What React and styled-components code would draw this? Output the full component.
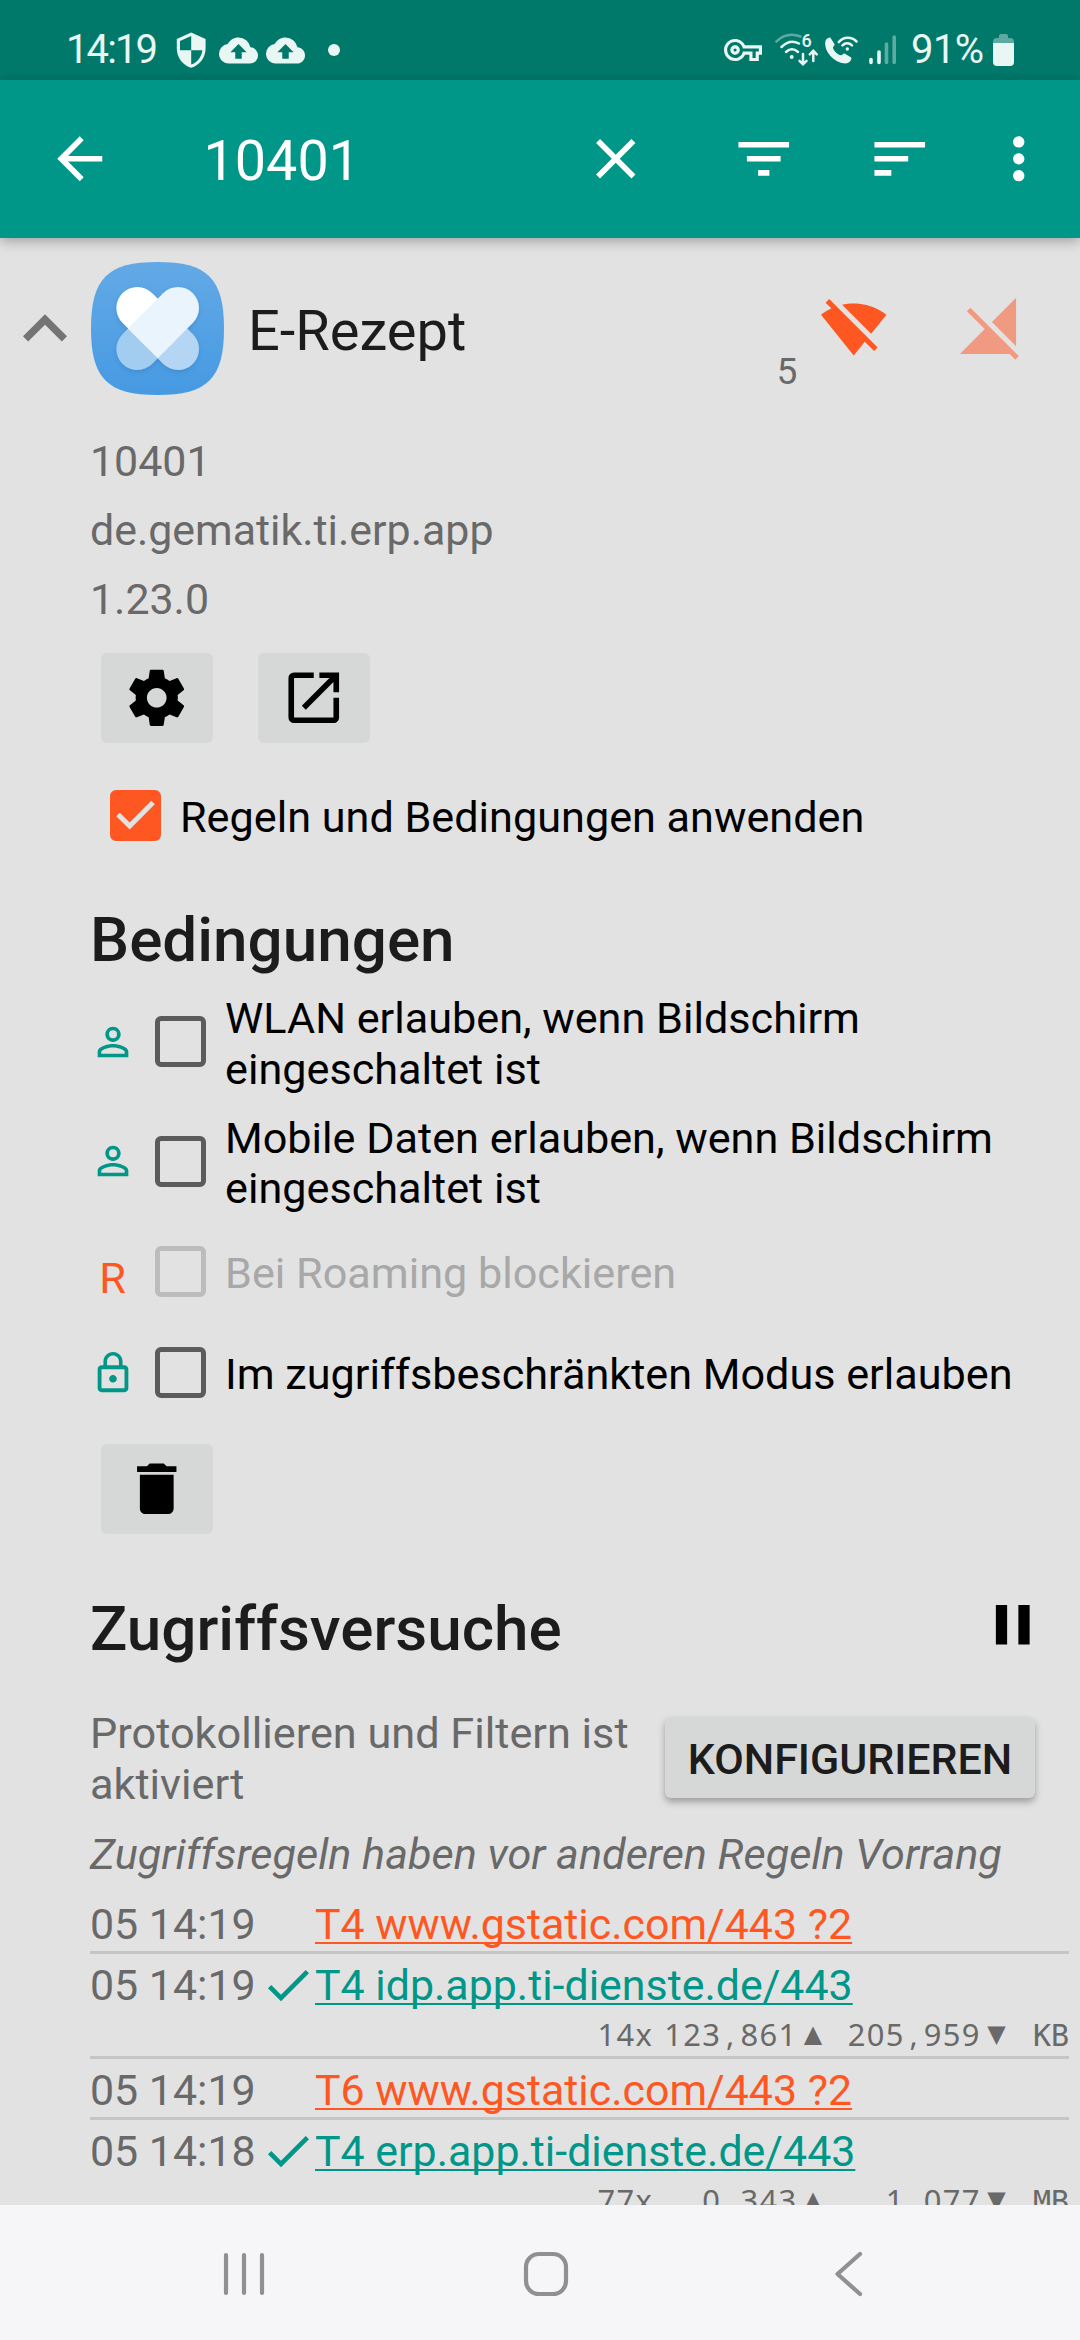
import React, { useState } from "react";
import styled, { createGlobalStyle } from "styled-components";
import {
  MdArrowBack,
  MdCheck,
  MdClose,
  MdCloudUpload,
  MdDelete,
  MdExpandLess,
  MdFilterList,
  MdLockOutline,
  MdMoreVert,
  MdOpenInNew,
  MdOutlineVpnKey,
  MdPause,
  MdPersonOutline,
  MdSecurity,
  MdSort,
} from "react-icons/md";

const TEAL = "#009688";
const TEAL_DARK = "#00796b";
const ORANGE = "#ff5722";
const BACKGROUND = "#e2e2e2";
const BUTTON = "#d6d8d7";
const TEXT_PRIMARY = "#1c1c1c";
const TEXT_SECONDARY = "#696969";

const GlobalStyle = createGlobalStyle`
  body {
    margin: 0;
    background: ${BACKGROUND};
    font-family: Roboto, "Liberation Sans", sans-serif;
  }

  svg {
    display: block;
    flex-shrink: 0;
  }
`;

const Screen = styled.div`
  display: flex;
  flex-direction: column;
  width: 1080px;
  height: 2340px;
  overflow: hidden;
  background: ${BACKGROUND};
`;

const StatusBar = styled.div`
  display: flex;
  align-items: center;
  justify-content: space-between;
  flex-shrink: 0;
  box-sizing: border-box;
  height: 80px;
  padding: 20px 66px 0 66px;
  background: ${TEAL_DARK};
  color: #e8f6f4;
`;

const StatusGroup = styled.div`
  display: flex;
  align-items: center;
`;

const Clock = styled.div`
  width: 106px;
  font-size: 40px;
  line-height: 48px;
  letter-spacing: -1.9px;
`;

const StatusDot = styled.div`
  width: 12px;
  height: 12px;
  margin-left: 23px;
  border-radius: 50%;
  background: currentColor;
`;

const Battery = styled.div`
  width: 82px;
  margin-left: 14px;
  font-size: 40px;
  line-height: 48px;
  letter-spacing: -0.6px;
`;

const Spacer = styled.div`
  width: ${(props) => props.$width}px;
`;

const Toolbar = styled.div`
  display: flex;
  align-items: center;
  flex-shrink: 0;
  box-sizing: border-box;
  height: 158px;
  padding: 0 28px 0 46px;
  background: ${TEAL};
  color: #ffffff;
  font-size: 67.5px;
  box-shadow: 0 3px 12px rgba(0, 0, 0, 0.3);
  z-index: 1;
`;

const SearchText = styled.div`
  flex: 1;
  margin-left: 90px;
  padding-top: 3px;
  font-size: 55.7px;
  line-height: 66px;
`;

const Actions = styled.div`
  display: grid;
  grid-template-columns: 148px 136px 119px 67.5px;
`;

const Content = styled.div`
  flex: 1;
  min-height: 0;
  overflow: hidden;
`;

const AppHeader = styled.div`
  display: flex;
  align-items: center;
  height: 181px;
  padding-left: 1px;
`;

const Expander = styled.div`
  width: 90px;
  font-size: 88px;
  color: #747474;
`;

const AppName = styled.div`
  flex: 1;
  margin-left: 24px;
  padding-top: 5px;
  font-size: 56px;
  line-height: 65px;
  color: ${TEXT_PRIMARY};
`;

const RuleCount = styled.div`
  align-self: flex-end;
  width: 43px;
  padding-bottom: 26px;
  font-size: 37.1px;
  line-height: 43px;
  color: ${TEXT_SECONDARY};
`;

const NetworkIcon = styled.svg`
  width: 67.5px;
  height: 67.5px;
  margin-right: ${(props) => props.$gap}px;
  fill: ${ORANGE};
  opacity: ${(props) => (props.$dim ? 0.5 : 1)};
`;

const Details = styled.div`
  padding: 8px 11px 0 90px;
  font-size: 42.9px;
  line-height: 50.7px;
  color: ${TEXT_SECONDARY};
`;

const DetailLine = styled.div`
  line-height: 69px;
`;

const ButtonRow = styled.div`
  display: flex;
  gap: 45px;
  padding-left: 11px;
  margin-top: ${(props) => props.$top}px;
`;

const IconButton = styled.button`
  display: flex;
  align-items: center;
  justify-content: center;
  width: 112px;
  height: 90px;
  padding: 0;
  border: 0;
  border-radius: 6px;
  background: ${BUTTON};
  color: #000000;
  font-size: 67.5px;
`;

const ApplyRow = styled.div`
  display: flex;
  align-items: center;
  height: 90px;
  margin-top: 27px;
  padding-left: 20px;
`;

const CheckBox = styled.div`
  display: flex;
  align-items: center;
  justify-content: center;
  flex-shrink: 0;
  box-sizing: border-box;
  width: 51px;
  height: 51px;
  border: 5px solid ${(props) => (props.$checked ? ORANGE : "#5b5b5b")};
  border-radius: 6px;
  background: ${(props) => (props.$checked ? ORANGE : "transparent")};
  opacity: ${(props) => (props.$disabled ? 0.28 : 1)};
`;

const CheckLabel = styled.div`
  margin-left: 19px;
  padding-top: 6px;
  font-size: 43.2px;
  line-height: 50.4px;
  color: ${(props) => (props.$disabled ? "#a8a8a8" : "#000000")};
`;

const HeadingRow = styled.div`
  display: flex;
  align-items: center;
  justify-content: space-between;
  height: 73px;
  margin-top: ${(props) => props.$top}px;
  padding-right: 23px;
  font-size: 67.5px;
  color: #000000;

  svg {
    margin-bottom: 6px;
  }
`;

const Heading = styled.div`
  padding-top: 2px;
  font-size: 62px;
  font-weight: 500;
  line-height: 73px;
  color: ${TEXT_PRIMARY};
`;

const Conditions = styled.div`
  margin-top: 7px;
`;

const Condition = styled.div`
  display: flex;
  align-items: center;
  height: ${(props) => (props.$tall ? 119.5 : 101)}px;
`;

const ConditionIcon = styled.div`
  display: flex;
  justify-content: center;
  width: 45px;
  margin-right: 20px;
  font-size: 46px;
  color: ${TEAL};
`;

const RoamingMark = styled.div`
  padding-top: 16px;
  font-size: 43.3px;
  color: ${ORANGE};
`;

const ConfigRow = styled.div`
  display: flex;
  align-items: center;
  justify-content: space-between;
  height: 101px;
  margin-top: 45px;
  padding-right: 34px;
`;

const ConfigText = styled.div`
  width: 560px;
  font-size: 43.25px;
  line-height: 50.4px;
`;

const ConfigButton = styled.button`
  width: 370px;
  height: 81px;
  margin-bottom: 5px;
  padding: 4px 0 0;
  border: 0;
  border-radius: 6px;
  background: ${BUTTON};
  color: ${TEXT_PRIMARY};
  font-family: inherit;
  font-size: 42.9px;
  font-weight: 500;
  text-transform: uppercase;
  white-space: nowrap;
  box-shadow: 0 4px 7px rgba(0, 0, 0, 0.3);
`;

const Hint = styled.div`
  margin: 20px 0 12px;
  font-size: 43.2px;
  font-style: italic;
  white-space: nowrap;
`;

const LogEntry = styled.div`
  padding: 6px 0 1px;
  border-bottom: 3px solid #c5c5c5;
`;

const LogLine = styled.div`
  display: grid;
  grid-template-columns: 170px 55px 1fr;
  height: 51px;
`;

const LogState = styled.div`
  margin-top: -3px;
  font-size: 56px;
  color: ${TEAL};
`;

const LogHost = styled.div`
  color: ${(props) => (props.$allowed ? TEAL : ORANGE)};
  white-space: nowrap;
  text-decoration: underline;
  text-decoration-thickness: 2px;
  text-decoration-skip-ink: none;
  text-underline-offset: 3px;
`;

const Traffic = styled.div`
  display: flex;
  justify-content: flex-end;
  height: 44px;
  font-family: "Noto Sans", sans-serif;
  font-size: 30.9px;
  line-height: 47px;
  letter-spacing: 1.35px;
  white-space: pre;
`;

const Fixed = styled.span`
  display: inline-block;
  width: ${(props) => props.$cells * 19.05}px;
  text-align: ${(props) => props.$align || "right"};
`;

const Unit = styled(Fixed)`
  font-family: "DejaVu Sans Mono", monospace;
  font-size: 30px;
  line-height: 50px;
  letter-spacing: 0;
`;

const Arrow = styled.span`
  display: inline-block;
  width: 31px;
  font-family: "DejaVu Sans", sans-serif;
  font-size: 24px;
  letter-spacing: 0;
  text-align: center;
`;

const NavBar = styled.div`
  display: grid;
  grid-template-columns: 301px 295px 46px;
  align-items: center;
  flex-shrink: 0;
  box-sizing: border-box;
  height: 135px;
  padding: 3px 0 0 222px;
  background: #f6f6f8;
`;

const NavIcon = styled.svg`
  width: 46px;
  height: 46px;
  fill: none;
  stroke: #909090;
  stroke-width: 4.2;
  stroke-linecap: round;
  stroke-linejoin: round;
`;

const CONDITIONS = [
  { icon: <MdPersonOutline />, label: ["WLAN erlauben, wenn Bildschirm", "eingeschaltet ist"] },
  { icon: <MdPersonOutline />, label: ["Mobile Daten erlauben, wenn Bildschirm", "eingeschaltet ist"] },
  { icon: <RoamingMark>R</RoamingMark>, label: ["Bei Roaming blockieren"], disabled: true },
  { icon: <MdLockOutline />, label: ["Im zugriffsbeschränkten Modus erlauben"] },
];

const LOG = [
  { time: "05 14:19", host: "T4 www.gstatic.com/443 ?2" },
  {
    time: "05 14:19",
    host: "T4 idp.app.ti-dienste.de/443",
    allowed: true,
    traffic: { count: "14x", up: "123,861", down: "205,959", unit: "KB" },
  },
  { time: "05 14:19", host: "T6 www.gstatic.com/443 ?2" },
  {
    time: "05 14:18",
    host: "T4 erp.app.ti-dienste.de/443",
    allowed: true,
    traffic: { count: "77x", up: "0,343", down: "1,077", unit: "MB" },
  },
];

function WifiStatus() {
  return (
    <svg width="44" height="34" viewBox="0 0 44 34" fill="none" stroke="currentColor" strokeWidth="2.5" strokeLinecap="round">
      <path d="M1.5 8.5C8 2 17 .5 25.5 3.5" opacity=".4" />
      <path d="M6.5 14C12 8.5 18.5 7.5 24 10.5" />
      <path d="M11 19c4-3.7 8-3.7 12 0" />
      <circle cx="16.7" cy="24" r="2" fill="currentColor" stroke="none" />
      <path d="M28 21v10M24.5 27.8l3.5 3.5 3.5-3.5M38.3 28V18M34.8 21.3l3.5-3.5 3.5 3.5" />
      <text x="26.5" y="13.5" fontSize="18" fontWeight="500" fill="currentColor" stroke="none">
        6
      </text>
    </svg>
  );
}

function CallStatus() {
  return (
    <svg width="34" height="29" viewBox="0 0 34 29" fill="none" stroke="currentColor" strokeWidth="2.6" strokeLinecap="round">
      <path
        d="M.3 5.5C.8 3.2 3.5 1.5 5.3 1.6L9.6 8.2C9.9 9.2 7.8 10.5 8 12c.8 3 4.5 6.5 7.8 7.3 1.5.2 2.2-2.2 3.7-1.8l6.7 4c.8 2.2-1.5 5-4.2 5.8C12 28.5-1.3 17 .3 5.5z"
        fill="currentColor"
        stroke="none"
      />
      <path d="M13.8 6C18.5.5 26.5.5 31.5 5.5M17.5 9.3c2.7-2.8 6.7-2.8 9.5 0" />
      <circle cx="22.3" cy="13" r="1.7" fill="currentColor" stroke="none" />
    </svg>
  );
}

function SignalStatus() {
  return (
    <svg width="28" height="30" viewBox="0 0 28 30" stroke="currentColor" strokeWidth="3.6" strokeLinecap="round">
      <path d="M2 24.5V27.5M10 17V27.5" />
      <path d="M17.5 9V27.5M25.2 2V27.5" opacity=".4" />
    </svg>
  );
}

function BatteryStatus() {
  return (
    <svg width="21" height="32" viewBox="0 0 21 32" fill="currentColor">
      <path d="M6 4V2q0-2 2-2h5q2 0 2 2v2h2q4 0 4 4v1H0V8q0-4 4-4z" opacity=".4" />
      <path d="M0 9h21v19q0 4-4 4H4q-4 0-4-4z" />
    </svg>
  );
}

// two crossed plasters, the upper halves form a heart
function AppIcon() {
  return (
    <svg width="133" height="133" viewBox="0 0 133 133">
      <defs>
        <linearGradient id="tile" x1="0" y1="0" x2="0" y2="1">
          <stop offset="0" stopColor="#63a9e6" />
          <stop offset="1" stopColor="#469ae2" />
        </linearGradient>
        <filter id="lift" filterUnits="userSpaceOnUse" x="0" y="0" width="133" height="133">
          <feDropShadow dx="0" dy="2" stdDeviation="2" floodColor="#2a6fb0" floodOpacity=".35" />
        </filter>
      </defs>
      <path
        d="M66.5 0C116.5 0 133 16.5 133 66.5S116.5 133 66.5 133 0 116.5 0 66.5 16.5 0 66.5 0z"
        fill="url(#tile)"
      />
      <g filter="url(#lift)">
        <path d="M66.7 66.5L46.4 87" stroke="#a3cdf0" strokeWidth="42" strokeLinecap="round" />
        <path d="M66.7 66.5L87 87" stroke="#b4d6f4" strokeWidth="42" strokeLinecap="round" />
        <path d="M66.7 66.5L46.4 46" stroke="#ffffff" strokeWidth="42" strokeLinecap="round" />
        <circle cx="87" cy="46" r="21" fill="#eaf4fc" />
        <path d="M87 46L51.85 81.35" stroke="#eaf4fc" strokeWidth="42" />
      </g>
    </svg>
  );
}

// groups of digits sit in monospaced columns, the separator takes a full column
function Amount({ value, cells }) {
  const [whole, fraction] = value.split(",");
  return (
    <Fixed $cells={cells}>
      {whole}
      <Fixed $cells={1} $align="center">
        ,
      </Fixed>
      {fraction}
    </Fixed>
  );
}

function TrafficLine({ count, up, down, unit }) {
  return (
    <Traffic>
      <Fixed $cells={3}>{count}</Fixed>
      <Spacer $width={11} />
      <Amount value={up} cells={7} />
      <Arrow>▲</Arrow>
      <Amount value={down} cells={8} />
      <Arrow>▼</Arrow>
      <Unit $cells={3}>{unit}</Unit>
    </Traffic>
  );
}

export default function App() {
  const [applyRules, setApplyRules] = useState(true);

  return (
    <>
      <GlobalStyle />
      <Screen>
        <StatusBar>
          <StatusGroup>
            <Clock>14:19</Clock>
            <MdSecurity size={38.4} />
            <Spacer $width={9} />
            <MdCloudUpload size={39} />
            <Spacer $width={8} />
            <MdCloudUpload size={39} />
            <StatusDot />
          </StatusGroup>
          <StatusGroup>
            <MdOutlineVpnKey size={38} />
            <Spacer $width={13} />
            <WifiStatus />
            <Spacer $width={6} />
            <CallStatus />
            <Spacer $width={10} />
            <SignalStatus />
            <Battery>91%</Battery>
            <BatteryStatus />
          </StatusGroup>
        </StatusBar>
        <Toolbar>
          <MdArrowBack />
          <SearchText>10401</SearchText>
          <Actions>
            <MdClose />
            <MdFilterList />
            <MdSort />
            <MdMoreVert />
          </Actions>
        </Toolbar>
        <Content>
          <AppHeader>
            <Expander>
              <MdExpandLess />
            </Expander>
            <AppIcon />
            <AppName>E-Rezept</AppName>
            <RuleCount>5</RuleCount>
            <NetworkIcon viewBox="0 0 24 24" $gap={70}>
              <path d="M23.64 7c-.45-.34-4.93-4-11.64-4-1.5 0-2.89.19-4.15.48L18.18 13.8 23.64 7zm-6.6 8.22L3.27 1.44 2 2.72l2.05 2.06C1.91 5.76.59 6.82.36 7l11.63 14.49.01.01.01-.01 3.9-4.86 3.32 3.32 1.27-1.27-3.46-3.46z" />
            </NetworkIcon>
            <NetworkIcon viewBox="0 0 24 24" $gap={55.5} $dim>
              <path d="M21 1l-8.59 8.59L21 18.18V1zM4.77 4.5L3.5 5.77l6.36 6.36L1 21h17.73l2 2L22 21.73 4.77 4.5z" />
            </NetworkIcon>
          </AppHeader>
          <Details>
            <DetailLine>10401</DetailLine>
            <DetailLine>de.gematik.ti.erp.app</DetailLine>
            <DetailLine>1.23.0</DetailLine>
            <ButtonRow $top={19}>
              <IconButton>
                <svg width="67.5" height="67.5" viewBox="0 0 24 24">
                  <path d="M19.43 12.98c.04-.32.07-.64.07-.98s-.03-.66-.07-.98l2.11-1.65c.19-.15.24-.42.12-.64l-2-3.46c-.12-.22-.39-.3-.61-.22l-2.49 1c-.52-.4-1.08-.73-1.69-.98l-.38-2.65C14.46 2.18 14.25 2 14 2h-4c-.25 0-.46.18-.49.42l-.38 2.65c-.61.25-1.17.59-1.69.98l-2.49-1c-.23-.09-.49 0-.61.22l-2 3.46c-.13.22-.07.49.12.64l2.11 1.65c-.04.32-.07.65-.07.98s.03.66.07.98l-2.11 1.65c-.19.15-.24.42-.12.64l2 3.46c.12.22.39.3.61.22l2.49-1c.52.4 1.08.73 1.69.98l.38 2.65c.03.24.24.42.49.42h4c.25 0 .46-.18.49-.42l.38-2.65c.61-.25 1.17-.59 1.69-.98l2.49 1c.23.09.49 0 .61-.22l2-3.46c.12-.22.07-.49-.12-.64l-2.11-1.65zM12 15.5c-1.93 0-3.5-1.57-3.5-3.5s1.57-3.5 3.5-3.5 3.5 1.57 3.5 3.5-1.57 3.5-3.5 3.5z" />
                </svg>
              </IconButton>
              <IconButton>
                <MdOpenInNew />
              </IconButton>
            </ButtonRow>
            <ApplyRow onClick={() => setApplyRules((old) => !old)}>
              <CheckBox $checked={applyRules}>
                {applyRules && (
                  <svg width="39" height="30" viewBox="0 0 39 30" fill="none" stroke={BACKGROUND} strokeWidth="5">
                    <path d="M2 14.5L13.7 26 37 2.5" />
                  </svg>
                )}
              </CheckBox>
              <CheckLabel>Regeln und Bedingungen anwenden</CheckLabel>
            </ApplyRow>
            <HeadingRow $top={42}>
              <Heading>Bedingungen</Heading>
            </HeadingRow>
            <Conditions>
              {CONDITIONS.map(({ icon, label, disabled }) => (
                <Condition key={label[0]} $tall={label.length > 1}>
                  <ConditionIcon>{icon}</ConditionIcon>
                  <CheckBox $disabled={disabled} />
                  <CheckLabel $disabled={disabled}>
                    {label.map((line) => (
                      <div key={line}>{line}</div>
                    ))}
                  </CheckLabel>
                </Condition>
              ))}
            </Conditions>
            <ButtonRow $top={21}>
              <IconButton>
                <MdDelete />
              </IconButton>
            </ButtonRow>
            <HeadingRow $top={57}>
              <Heading>Zugriffsversuche</Heading>
              <MdPause />
            </HeadingRow>
            <ConfigRow>
              <ConfigText>Protokollieren und Filtern ist aktiviert</ConfigText>
              <ConfigButton>Konfigurieren</ConfigButton>
            </ConfigRow>
            <Hint>Zugriffsregeln haben vor anderen Regeln Vorrang</Hint>
            {LOG.map(({ time, host, allowed, traffic }) => (
              <LogEntry key={host}>
                <LogLine>
                  <div>{time}</div>
                  <LogState>{allowed && <MdCheck />}</LogState>
                  <LogHost $allowed={allowed}>{host}</LogHost>
                </LogLine>
                {traffic && <TrafficLine {...traffic} />}
              </LogEntry>
            ))}
          </Details>
        </Content>
        <NavBar>
          <NavIcon viewBox="0 0 46 46">
            <path d="M4 4v38M22 4v38M40 4v38" />
          </NavIcon>
          <NavIcon viewBox="0 0 46 46">
            <rect x="3" y="3" width="40" height="40" rx="13" />
          </NavIcon>
          <NavIcon viewBox="0 0 46 46">
            <path d="M42 3L19.5 23 42 43" />
          </NavIcon>
        </NavBar>
      </Screen>
    </>
  );
}
